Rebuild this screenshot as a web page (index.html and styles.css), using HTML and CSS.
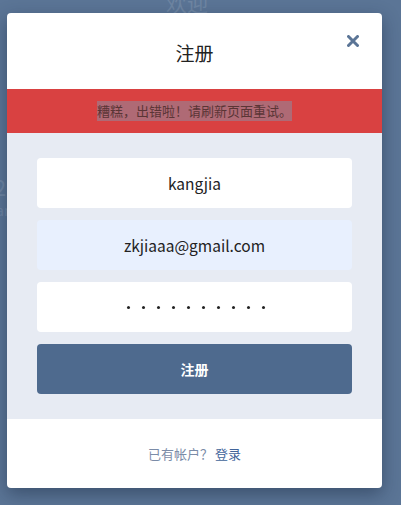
FILE: index.html
```html
<!DOCTYPE html>
<html lang="zh-CN">
<head>
    <meta charset="UTF-8">
    <meta name="viewport" content="width=device-width, initial-scale=1.0">
    <link rel="stylesheet" href="styles.css">
</head>
<body>
    <div class="page">
        <h1 class="page-title">欢迎</h1>
        <div class="page-stat">2</div>
        <div class="page-note">an</div>
    </div>
    <div class="overlay">
        <div class="modal">
            <div class="modal-header">
                <h2 class="modal-title">注册</h2>
                <span class="close">
                    <svg width="12" height="12" viewBox="0 0 12 12">
                        <path d="M1.5 1.5 L10.5 10.5 M10.5 1.5 L1.5 10.5" stroke="#5b7596" stroke-width="3" stroke-linecap="round"/>
                    </svg>
                </span>
            </div>
            <div class="alert"><span class="alert-text">糟糕，出错啦！请刷新页面重试。</span></div>
            <form class="modal-body">
                <input type="text" class="field" value="kangjia">
                <input type="email" class="field autofill" value="zkjiaaa@gmail.com">
                <div class="field password">
                    <span class="dot"></span><span class="dot"></span><span class="dot"></span><span class="dot"></span><span class="dot"></span>
                    <span class="dot"></span><span class="dot"></span><span class="dot"></span><span class="dot"></span><span class="dot"></span>
                </div>
                <button type="submit" class="submit">注册</button>
            </form>
            <div class="modal-footer">
                已有帐户？ <a href="#" class="link">登录</a>
            </div>
        </div>
    </div>
</body>
</html>
```

FILE: styles.css
```css
* {
    box-sizing: border-box;
}

body {
    margin: 0;
    font-family: "Noto Sans CJK SC", "Noto Sans", sans-serif;
    background-color: #5b7596;
    height: 505px;
    overflow: hidden;
}

/* page behind the dialog */
.page {
    position: absolute;
    inset: 0;
    color: #6f86a3;
}

.page-title {
    margin: 0;
    text-align: center;
    font-size: 21px;
    font-weight: normal;
    line-height: 1;
    margin-top: -8px;
    padding-right: 27px;
}

.page-stat {
    position: absolute;
    left: -6px;
    top: 170px;
    font-size: 22px;
}

.page-note {
    position: absolute;
    left: -4px;
    top: 200px;
    font-size: 14px;
}

.overlay {
    position: absolute;
    inset: 0;
    padding: 13px 19px 0 7px;
}

.modal {
    width: 375px;
    background-color: #fff;
    border-radius: 4px;
    overflow: hidden;
    box-shadow: 0 6px 18px rgba(20, 35, 60, 0.45);
}

.modal-header {
    position: relative;
    height: 76px;
    display: flex;
    align-items: center;
    justify-content: center;
}

.modal-title {
    margin: 0;
    font-size: 19px;
    font-weight: normal;
    color: #222;
    padding-top: 2px;
}

.close {
    position: absolute;
    right: 23px;
    top: 22px;
    width: 12px;
    height: 12px;
    display: block;
}

.close svg {
    display: block;
}

.alert {
    height: 44px;
    background-color: #d94141;
    display: flex;
    align-items: center;
    justify-content: center;
}

.alert-text {
    font-size: 13px;
    line-height: 20px;
    color: #5a3535;
    background-color: rgba(140, 140, 160, 0.55);
}

.modal-body {
    background-color: #e7ebf3;
    padding: 25px 30px 25px;
    display: flex;
    flex-direction: column;
    gap: 12px;
}

.field {
    height: 50px;
    width: 100%;
    border: none;
    border-radius: 4px;
    background-color: #fff;
    text-align: center;
    font-family: inherit;
    font-size: 15.5px;
    color: #222;
    outline: none;
}

.autofill {
    background-color: #e8f0fe;
}

.password {
    display: flex;
    align-items: center;
    justify-content: center;
    gap: 12px;
    padding-left: 2px;
}

.dot {
    width: 3px;
    height: 3px;
    border-radius: 50%;
    background-color: #222;
}

.submit {
    height: 50px;
    border: none;
    border-radius: 4px;
    background-color: #4e6a8e;
    color: #fff;
    font-family: inherit;
    font-size: 14px;
    font-weight: bold;
    cursor: pointer;
}

.modal-footer {
    height: 69px;
    display: flex;
    align-items: center;
    justify-content: center;
    font-size: 13px;
    color: #7b8ca8;
    gap: 2px;
}

.link {
    color: #41649a;
    text-decoration: none;
}
```
